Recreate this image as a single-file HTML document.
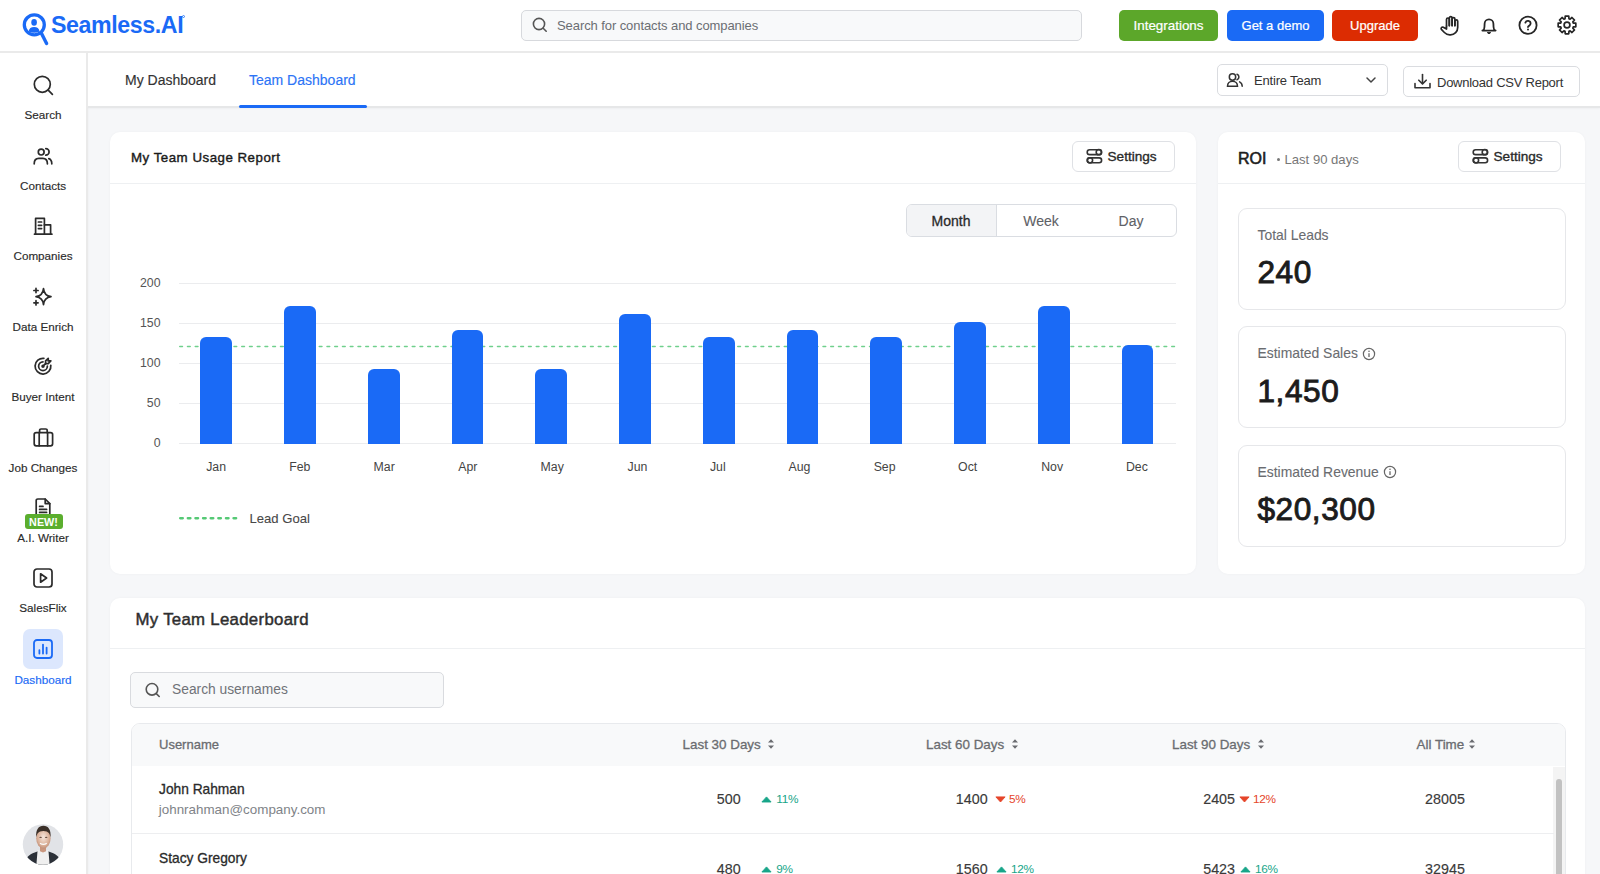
<!DOCTYPE html>
<html><head><meta charset="utf-8"><title>Team Dashboard</title>
<style>
html,body{margin:0;padding:0;}
body{width:1600px;height:874px;position:relative;overflow:hidden;background:#F6F7F9;font-family:"Liberation Sans", sans-serif;}
</style></head><body>
<div style="position:absolute;left:0px;top:0px;width:1600px;height:51px;background:#fff;"></div>
<div style="position:absolute;left:0px;top:51px;width:1600px;height:2px;background:#EAEAEA;box-shadow:0 1px 2px rgba(0,0,0,0.03);"></div>
<svg style="position:absolute;left:20px;top:11px;" width="30" height="36" viewBox="0 0 30 36" fill="none">
<circle cx="14.3" cy="13.8" r="10" stroke="#1A6AF6" stroke-width="3.3"/>
<line x1="21.4" y1="22.2" x2="26.6" y2="32.4" stroke="#1A6AF6" stroke-width="3.4" stroke-linecap="round"/>
<ellipse cx="14.1" cy="11.4" rx="2.8" ry="3.3" fill="#1A6AF6"/>
<path d="M8.6 20.4 Q9.4 16.1 14.1 16.1 Q18.8 16.1 19.6 20.4 Q14.1 23.2 8.6 20.4Z" fill="#1A6AF6"/>
</svg>
<div style="position:absolute;top:13.56px;font-size:23.2px;line-height:23.2px;color:#1A6AF6;font-weight:700;white-space:nowrap;letter-spacing:-0.4px;left:51px;">Seamless.AI</div>
<div style="position:absolute;left:182px;top:15px;width:3px;height:3px;border-radius:50%;border:0.8px solid #1A6AF6;box-sizing:border-box;opacity:.8"></div>
<div style="position:absolute;left:521px;top:10px;width:561px;height:31px;background:#F8F9FA;border:1px solid #D7D9DD;border-radius:5px;box-sizing:border-box;"></div>
<svg style="position:absolute;left:532px;top:17px;" width="16" height="16" viewBox="0 0 16 16" fill="none"><circle cx="7" cy="7" r="5.6" stroke="#555" stroke-width="1.6"/><line x1="11.2" y1="11.2" x2="14.2" y2="14.2" stroke="#555" stroke-width="1.6" stroke-linecap="round"/></svg>
<div style="position:absolute;top:18.99px;font-size:13px;line-height:13px;color:#6B6E73;font-weight:400;white-space:nowrap;letter-spacing:-0.08px;left:557px;">Search for contacts and companies</div>
<div style="position:absolute;left:1119px;top:10px;width:99px;height:31px;background:#5CA72A;border-radius:5px;"></div>
<div style="position:absolute;top:18.85px;font-size:13.4px;line-height:13.4px;color:#fff;font-weight:400;white-space:nowrap;-webkit-text-stroke:0.22px #fff;left:668.5px;width:1000px;text-align:center;">Integrations</div>
<div style="position:absolute;left:1227px;top:10px;width:97px;height:31px;background:#1A6AF5;border-radius:5px;"></div>
<div style="position:absolute;top:19.19px;font-size:13px;line-height:13px;color:#fff;font-weight:400;white-space:nowrap;-webkit-text-stroke:0.22px #fff;left:775.5px;width:1000px;text-align:center;">Get a demo</div>
<div style="position:absolute;left:1332px;top:10px;width:86px;height:31px;background:#DC2C02;border-radius:5px;"></div>
<div style="position:absolute;top:19.19px;font-size:13px;line-height:13px;color:#fff;font-weight:400;white-space:nowrap;-webkit-text-stroke:0.22px #fff;left:875.0px;width:1000px;text-align:center;">Upgrade</div>
<svg style="position:absolute;left:1439px;top:14px;" width="22" height="22" viewBox="0 0 22 22" fill="none"><g stroke="#262626" stroke-width="1.7" stroke-linecap="round" stroke-linejoin="round" fill="none">
<path d="M7.5 12V5.4a1.4 1.4 0 0 1 2.8 0V11.6"/>
<path d="M10.3 11.6V4a1.4 1.4 0 0 1 2.8 0V11.6"/>
<path d="M13.1 11.6V5a1.4 1.4 0 0 1 2.8 0V11.6"/>
<path d="M15.9 11.6V7.2a1.4 1.4 0 0 1 2.8 0v6.3a7.2 7.2 0 0 1-7.2 7.3h-.8c-2.2 0-3.8-.8-5.3-2.3L2.4 15.4a1.5 1.5 0 0 1 1.9-2.2l3.2 1.8V12"/>
</g></svg>
<svg style="position:absolute;left:1479px;top:15px;" width="20" height="20" viewBox="0 0 20 20" fill="none"><g stroke="#262626" stroke-width="1.8" stroke-linecap="round" stroke-linejoin="round" fill="none">
<path d="M5 14.2c.6-1.2.6-3 .6-5.4a4.4 4.4 0 0 1 8.8 0c0 2.4 0 4.2.6 5.4.4.7 1 1 1.6 1.4H3.4c.6-.4 1.2-.7 1.6-1.4z"/>
</g><path d="M8.3 17.6h3.4L10 18.8z" fill="#262626" stroke="#262626" stroke-width="1" stroke-linejoin="round"/></svg>
<svg style="position:absolute;left:1518px;top:15px;" width="20" height="20" viewBox="0 0 20 20" fill="none"><g stroke="#262626" stroke-width="1.8" stroke-linecap="round" stroke-linejoin="round" fill="none">
<circle cx="10" cy="10.2" r="8.6"/>
<path d="M7.4 7.6a2.7 2.7 0 0 1 5.2.9c0 1.8-2.6 2.4-2.6 3.6"/></g>
<circle cx="10" cy="14.6" r="1" fill="#262626"/></svg>
<svg style="position:absolute;left:1557px;top:15px;" width="20" height="20" viewBox="0 0 20 20" fill="none"><g stroke="#262626" stroke-width="1.7" stroke-linejoin="round" fill="none">
<path d="M8.05 3.69 L8.21 1.18 L11.79 1.18 L11.95 3.69 L13.08 4.16 L14.97 2.50 L17.50 5.03 L15.84 6.92 L16.31 8.05 L18.82 8.21 L18.82 11.79 L16.31 11.95 L15.84 13.08 L17.50 14.97 L14.97 17.50 L13.08 15.84 L11.95 16.31 L11.79 18.82 L8.21 18.82 L8.05 16.31 L6.92 15.84 L5.03 17.50 L2.50 14.97 L4.16 13.08 L3.69 11.95 L1.18 11.79 L1.18 8.21 L3.69 8.05 L4.16 6.92 L2.50 5.03 L5.03 2.50 L6.92 4.16Z"/>
<circle cx="10" cy="10" r="2.9"/></g></svg>
<div style="position:absolute;left:0px;top:53px;width:86px;height:821px;background:#fff;"></div>
<div style="position:absolute;left:86px;top:53px;width:1.5px;height:821px;background:#EAEAEA;box-shadow:1px 0 2px rgba(0,0,0,0.025);"></div>
<div style="position:absolute;left:87.5px;top:53px;width:1512.5px;height:53.5px;background:#fff;"></div>
<div style="position:absolute;left:87.5px;top:106px;width:1512.5px;height:1.5px;background:#E6E7E8;box-shadow:0 1px 2px rgba(0,0,0,0.035);"></div>
<div style="position:absolute;top:73.15px;font-size:14px;line-height:14px;color:#333;font-weight:400;white-space:nowrap;-webkit-text-stroke:0.15px #333;left:125px;">My Dashboard</div>
<div style="position:absolute;top:73.15px;font-size:14px;line-height:14px;color:#2C74F6;font-weight:400;white-space:nowrap;-webkit-text-stroke:0.15px #2C74F6;left:249px;">Team Dashboard</div>
<div style="position:absolute;left:238.5px;top:104.5px;width:128.5px;height:3px;background:#1A6AF6;border-radius:2px;"></div>
<div style="position:absolute;left:1217px;top:64px;width:171px;height:32px;background:#fff;border:1px solid #DADCE0;border-radius:5px;box-sizing:border-box;"></div>
<svg style="position:absolute;left:1226px;top:72px;" width="18" height="16" viewBox="0 0 18 16" fill="none"><g stroke="#333" stroke-width="1.5" stroke-linecap="round" fill="none">
<circle cx="6.5" cy="5" r="3.2"/><path d="M1.5 14.2c0-3 2.2-5 5-5s5 2 5 5z"/><path d="M11 2.2a3 3 0 0 1 0 5.6"/><path d="M13.6 9.8c1.6.8 2.6 2.4 2.6 4.4"/></g></svg>
<div style="position:absolute;top:74.39px;font-size:13px;line-height:13px;color:#333;font-weight:400;white-space:nowrap;letter-spacing:-0.18px;left:1254px;">Entire Team</div>
<svg style="position:absolute;left:1364px;top:74px;" width="14" height="12" viewBox="0 0 14 12" fill="none"><path d="M3 4l4 4 4-4" stroke="#444" stroke-width="1.5" fill="none" stroke-linecap="round" stroke-linejoin="round"/></svg>
<div style="position:absolute;left:1403px;top:66px;width:177px;height:31px;background:#fff;border:1px solid #DADCE0;border-radius:5px;box-sizing:border-box;"></div>
<svg style="position:absolute;left:1413px;top:73px;" width="19" height="17" viewBox="0 0 19 17" fill="none"><g stroke="#333" stroke-width="1.6" stroke-linecap="round" stroke-linejoin="round" fill="none">
<path d="M9.5 1.5v9"/><path d="M5.8 7.2l3.7 3.7 3.7-3.7"/><path d="M2 10.5v4.3h15v-4.3"/></g></svg>
<div style="position:absolute;top:75.69px;font-size:13px;line-height:13px;color:#333;font-weight:400;white-space:nowrap;letter-spacing:-0.25px;left:1437px;">Download CSV Report</div>
<div style="position:absolute;left:110px;top:132px;width:1085.5px;height:442px;background:#fff;border-radius:10px;box-shadow:0 0 3px rgba(0,0,0,0.035);"></div>
<div style="position:absolute;left:110px;top:183px;width:1085.5px;height:1px;background:#EEF0F2;"></div>
<div style="position:absolute;top:150.74px;font-size:13.3px;line-height:13.3px;color:#1A1A1A;font-weight:400;white-space:nowrap;letter-spacing:0.5px;-webkit-text-stroke:0.4px #1A1A1A;left:131px;">My Team Usage Report</div>
<div style="position:absolute;left:1072px;top:141px;width:103px;height:31px;background:#fff;border:1px solid #DFE1E5;border-radius:6px;box-sizing:border-box;"></div>
<svg style="position:absolute;left:1086px;top:148px;" width="17" height="17" viewBox="0 0 17 17" fill="none"><g stroke="#333" stroke-width="1.6" fill="none">
<rect x="1.2" y="1.7" width="14.4" height="4.9" rx="2.45"/><rect x="1.2" y="9.9" width="14.4" height="4.9" rx="2.45"/>
<circle cx="12.8" cy="4.15" r="2.6"/><circle cx="4" cy="12.35" r="2.6"/></g></svg>
<div style="position:absolute;top:149.68px;font-size:13.6px;line-height:13.6px;color:#2A2A2A;font-weight:400;white-space:nowrap;-webkit-text-stroke:0.35px #2A2A2A;left:1107.5px;">Settings</div>
<div style="position:absolute;left:906px;top:204px;width:271px;height:33px;background:#fff;border:1px solid #DADDE2;border-radius:6px;box-sizing:border-box;"></div>
<div style="position:absolute;left:907px;top:205px;width:89.5px;height:31px;background:#F3F4F6;border-radius:5px 0 0 5px;"></div>
<div style="position:absolute;left:996px;top:205px;width:1px;height:31px;background:#DADDE2;"></div>
<div style="position:absolute;top:214.05px;font-size:14px;line-height:14px;color:#2A2A2A;font-weight:400;white-space:nowrap;-webkit-text-stroke:0.3px #2A2A2A;left:451px;width:1000px;text-align:center;">Month</div>
<div style="position:absolute;top:214.05px;font-size:14px;line-height:14px;color:#5E6166;font-weight:400;white-space:nowrap;-webkit-text-stroke:0.1px #5E6166;left:541px;width:1000px;text-align:center;">Week</div>
<div style="position:absolute;top:214.05px;font-size:14px;line-height:14px;color:#5E6166;font-weight:400;white-space:nowrap;-webkit-text-stroke:0.1px #5E6166;left:631px;width:1000px;text-align:center;">Day</div>
<div style="position:absolute;left:179px;top:443.3px;width:997px;height:1px;background:#EBECEE;"></div>
<div style="position:absolute;top:437.29px;font-size:12.3px;line-height:12.3px;color:#555;font-weight:400;white-space:nowrap;left:-839.5px;width:1000px;text-align:right;">0</div>
<div style="position:absolute;left:179px;top:403.12px;width:997px;height:1px;background:#EBECEE;"></div>
<div style="position:absolute;top:397.11px;font-size:12.3px;line-height:12.3px;color:#555;font-weight:400;white-space:nowrap;left:-839.5px;width:1000px;text-align:right;">50</div>
<div style="position:absolute;left:179px;top:362.95px;width:997px;height:1px;background:#EBECEE;"></div>
<div style="position:absolute;top:356.94px;font-size:12.3px;line-height:12.3px;color:#555;font-weight:400;white-space:nowrap;left:-839.5px;width:1000px;text-align:right;">100</div>
<div style="position:absolute;left:179px;top:322.77px;width:997px;height:1px;background:#EBECEE;"></div>
<div style="position:absolute;top:316.76px;font-size:12.3px;line-height:12.3px;color:#555;font-weight:400;white-space:nowrap;left:-839.5px;width:1000px;text-align:right;">150</div>
<div style="position:absolute;left:179px;top:282.6px;width:997px;height:1px;background:#EBECEE;"></div>
<div style="position:absolute;top:276.59px;font-size:12.3px;line-height:12.3px;color:#555;font-weight:400;white-space:nowrap;left:-839.5px;width:1000px;text-align:right;">200</div>
<svg style="position:absolute;left:179px;top:345.25px;" width="997" height="3" viewBox="0 0 997 3" fill="none"><line x1="0.75" y1="1.5" x2="997" y2="1.5" stroke="#6FD08C" stroke-width="1.5" stroke-linecap="round" stroke-dasharray="2.7 5.05"/></svg>
<div style="position:absolute;left:200.3px;top:337.1px;width:31.8px;height:107.19999999999999px;background:#1A6AF6;border-radius:6px 6px 0 0;"></div>
<div style="position:absolute;top:460.59px;font-size:12.3px;line-height:12.3px;color:#444;font-weight:400;white-space:nowrap;left:-283.9px;width:1000px;text-align:center;">Jan</div>
<div style="position:absolute;left:284.06px;top:306.1px;width:31.8px;height:138.2px;background:#1A6AF6;border-radius:6px 6px 0 0;"></div>
<div style="position:absolute;top:460.59px;font-size:12.3px;line-height:12.3px;color:#444;font-weight:400;white-space:nowrap;left:-200.25px;width:1000px;text-align:center;">Feb</div>
<div style="position:absolute;left:367.82px;top:368.8px;width:31.8px;height:75.5px;background:#1A6AF6;border-radius:6px 6px 0 0;"></div>
<div style="position:absolute;top:460.59px;font-size:12.3px;line-height:12.3px;color:#444;font-weight:400;white-space:nowrap;left:-115.80000000000001px;width:1000px;text-align:center;">Mar</div>
<div style="position:absolute;left:451.58px;top:329.6px;width:31.8px;height:114.69999999999999px;background:#1A6AF6;border-radius:6px 6px 0 0;"></div>
<div style="position:absolute;top:460.59px;font-size:12.3px;line-height:12.3px;color:#444;font-weight:400;white-space:nowrap;left:-32.19999999999999px;width:1000px;text-align:center;">Apr</div>
<div style="position:absolute;left:535.34px;top:368.8px;width:31.8px;height:75.5px;background:#1A6AF6;border-radius:6px 6px 0 0;"></div>
<div style="position:absolute;top:460.59px;font-size:12.3px;line-height:12.3px;color:#444;font-weight:400;white-space:nowrap;left:52.200000000000045px;width:1000px;text-align:center;">May</div>
<div style="position:absolute;left:619.1px;top:313.6px;width:31.8px;height:130.7px;background:#1A6AF6;border-radius:6px 6px 0 0;"></div>
<div style="position:absolute;top:460.59px;font-size:12.3px;line-height:12.3px;color:#444;font-weight:400;white-space:nowrap;left:137.5px;width:1000px;text-align:center;">Jun</div>
<div style="position:absolute;left:702.86px;top:337.3px;width:31.8px;height:107.0px;background:#1A6AF6;border-radius:6px 6px 0 0;"></div>
<div style="position:absolute;top:460.59px;font-size:12.3px;line-height:12.3px;color:#444;font-weight:400;white-space:nowrap;left:217.79999999999995px;width:1000px;text-align:center;">Jul</div>
<div style="position:absolute;left:786.62px;top:329.8px;width:31.8px;height:114.5px;background:#1A6AF6;border-radius:6px 6px 0 0;"></div>
<div style="position:absolute;top:460.59px;font-size:12.3px;line-height:12.3px;color:#444;font-weight:400;white-space:nowrap;left:299.5px;width:1000px;text-align:center;">Aug</div>
<div style="position:absolute;left:870.38px;top:337.3px;width:31.8px;height:107.0px;background:#1A6AF6;border-radius:6px 6px 0 0;"></div>
<div style="position:absolute;top:460.59px;font-size:12.3px;line-height:12.3px;color:#444;font-weight:400;white-space:nowrap;left:384.6px;width:1000px;text-align:center;">Sep</div>
<div style="position:absolute;left:954.14px;top:321.9px;width:31.8px;height:122.40000000000003px;background:#1A6AF6;border-radius:6px 6px 0 0;"></div>
<div style="position:absolute;top:460.59px;font-size:12.3px;line-height:12.3px;color:#444;font-weight:400;white-space:nowrap;left:467.70000000000005px;width:1000px;text-align:center;">Oct</div>
<div style="position:absolute;left:1037.9px;top:306.1px;width:31.8px;height:138.2px;background:#1A6AF6;border-radius:6px 6px 0 0;"></div>
<div style="position:absolute;top:460.59px;font-size:12.3px;line-height:12.3px;color:#444;font-weight:400;white-space:nowrap;left:552.0999999999999px;width:1000px;text-align:center;">Nov</div>
<div style="position:absolute;left:1121.66px;top:345.2px;width:31.8px;height:99.10000000000002px;background:#1A6AF6;border-radius:6px 6px 0 0;"></div>
<div style="position:absolute;top:460.59px;font-size:12.3px;line-height:12.3px;color:#444;font-weight:400;white-space:nowrap;left:636.9000000000001px;width:1000px;text-align:center;">Dec</div>
<svg style="position:absolute;left:178px;top:515px;" width="66" height="6" viewBox="0 0 66 6" fill="none"><rect x="1.00" y="2.1" width="5" height="2.3" rx="1.15" fill="#55C975"/><rect x="8.62" y="2.1" width="5" height="2.3" rx="1.15" fill="#55C975"/><rect x="16.24" y="2.1" width="5" height="2.3" rx="1.15" fill="#55C975"/><rect x="23.86" y="2.1" width="5" height="2.3" rx="1.15" fill="#55C975"/><rect x="31.48" y="2.1" width="5" height="2.3" rx="1.15" fill="#55C975"/><rect x="39.10" y="2.1" width="5" height="2.3" rx="1.15" fill="#55C975"/><rect x="46.72" y="2.1" width="5" height="2.3" rx="1.15" fill="#55C975"/><rect x="54.34" y="2.1" width="5" height="2.3" rx="1.15" fill="#55C975"/></svg>
<div style="position:absolute;top:512.31px;font-size:13.1px;line-height:13.1px;color:#484848;font-weight:400;white-space:nowrap;-webkit-text-stroke:0.1px #484848;left:249.5px;">Lead Goal</div>
<div style="position:absolute;left:1217.5px;top:132px;width:367.5px;height:442px;background:#fff;border-radius:10px;box-shadow:0 0 3px rgba(0,0,0,0.035);"></div>
<div style="position:absolute;left:1217.5px;top:183px;width:367.5px;height:1px;background:#EEF0F2;"></div>
<div style="position:absolute;top:151.45px;font-size:16px;line-height:16px;color:#1E1E1E;font-weight:400;white-space:nowrap;-webkit-text-stroke:0.6px #1E1E1E;left:1238px;">ROI</div>
<div style="position:absolute;left:1277px;top:158px;width:3px;height:3px;border-radius:50%;background:#777"></div>
<div style="position:absolute;top:152.51px;font-size:13.1px;line-height:13.1px;color:#777;font-weight:400;white-space:nowrap;left:1284.5px;">Last 90 days</div>
<div style="position:absolute;left:1458px;top:141px;width:103px;height:31px;background:#fff;border:1px solid #DFE1E5;border-radius:6px;box-sizing:border-box;"></div>
<svg style="position:absolute;left:1472px;top:148px;" width="17" height="17" viewBox="0 0 17 17" fill="none"><g stroke="#333" stroke-width="1.6" fill="none">
<rect x="1.2" y="1.7" width="14.4" height="4.9" rx="2.45"/><rect x="1.2" y="9.9" width="14.4" height="4.9" rx="2.45"/>
<circle cx="12.8" cy="4.15" r="2.6"/><circle cx="4" cy="12.35" r="2.6"/></g></svg>
<div style="position:absolute;top:149.68px;font-size:13.6px;line-height:13.6px;color:#2A2A2A;font-weight:400;white-space:nowrap;-webkit-text-stroke:0.35px #2A2A2A;left:1493.5px;">Settings</div>
<div style="position:absolute;left:1238px;top:207.5px;width:327.5px;height:102px;background:#fff;border:1.5px solid #E6E7EA;border-radius:9px;box-sizing:border-box;"></div>
<div style="position:absolute;top:228.73px;font-size:13.9px;line-height:13.9px;color:#6A6C70;font-weight:400;white-space:nowrap;-webkit-text-stroke:0.1px #6A6C70;left:1257.5px;">Total Leads</div>
<div style="position:absolute;top:257.04px;font-size:31.6px;line-height:31.6px;color:#1C1C1C;font-weight:400;white-space:nowrap;letter-spacing:0.55px;-webkit-text-stroke:0.9px #1C1C1C;left:1257.5px;">240</div>
<div style="position:absolute;left:1238px;top:326px;width:327.5px;height:102px;background:#fff;border:1.5px solid #E6E7EA;border-radius:9px;box-sizing:border-box;"></div>
<div style="position:absolute;top:347.23px;font-size:13.9px;line-height:13.9px;color:#6A6C70;font-weight:400;white-space:nowrap;-webkit-text-stroke:0.1px #6A6C70;left:1257.5px;">Estimated Sales</div>
<div style="position:absolute;top:375.54px;font-size:31.6px;line-height:31.6px;color:#1C1C1C;font-weight:400;white-space:nowrap;letter-spacing:0.55px;-webkit-text-stroke:0.9px #1C1C1C;left:1257.5px;">1,450</div>
<div style="position:absolute;left:1238px;top:444.5px;width:327.5px;height:102px;background:#fff;border:1.5px solid #E6E7EA;border-radius:9px;box-sizing:border-box;"></div>
<div style="position:absolute;top:465.73px;font-size:13.9px;line-height:13.9px;color:#6A6C70;font-weight:400;white-space:nowrap;-webkit-text-stroke:0.1px #6A6C70;left:1257.5px;">Estimated Revenue</div>
<div style="position:absolute;top:494.04px;font-size:31.6px;line-height:31.6px;color:#1C1C1C;font-weight:400;white-space:nowrap;letter-spacing:0.55px;-webkit-text-stroke:0.9px #1C1C1C;left:1257.5px;">$20,300</div>
<svg style="position:absolute;left:1362px;top:346.5px;" width="14" height="14" viewBox="0 0 14 14" fill="none"><circle cx="7" cy="7" r="5.6" stroke="#666" stroke-width="1.2" fill="none"/><line x1="7" y1="6.2" x2="7" y2="10" stroke="#666" stroke-width="1.3"/><circle cx="7" cy="4.3" r=".8" fill="#666"/></svg>
<svg style="position:absolute;left:1383px;top:465px;" width="14" height="14" viewBox="0 0 14 14" fill="none"><circle cx="7" cy="7" r="5.6" stroke="#666" stroke-width="1.2" fill="none"/><line x1="7" y1="6.2" x2="7" y2="10" stroke="#666" stroke-width="1.3"/><circle cx="7" cy="4.3" r=".8" fill="#666"/></svg>
<div style="position:absolute;left:110px;top:597.5px;width:1475px;height:300px;background:#fff;border-radius:10px;box-shadow:0 0 3px rgba(0,0,0,0.035);"></div>
<div style="position:absolute;left:110px;top:648px;width:1475px;height:1px;background:#EEF0F2;"></div>
<div style="position:absolute;top:612.28px;font-size:16.8px;line-height:16.8px;color:#2E2E2E;font-weight:400;white-space:nowrap;letter-spacing:0.3px;-webkit-text-stroke:0.45px #2E2E2E;left:135.5px;">My Team Leaderboard</div>
<div style="position:absolute;left:130px;top:672px;width:314px;height:36px;background:#F8F9FA;border:1px solid #D9DBDF;border-radius:5px;box-sizing:border-box;"></div>
<svg style="position:absolute;left:144px;top:682px;" width="18" height="16" viewBox="0 0 18 16" fill="none"><circle cx="8" cy="7.3" r="5.8" stroke="#555" stroke-width="1.6" fill="none"/><line x1="12.3" y1="11.6" x2="15.2" y2="14.5" stroke="#555" stroke-width="1.6" stroke-linecap="round"/></svg>
<div style="position:absolute;top:682.92px;font-size:13.8px;line-height:13.8px;color:#707378;font-weight:400;white-space:nowrap;left:172px;">Search usernames</div>
<div style="position:absolute;left:130.5px;top:722.5px;width:1435px;height:200px;background:#fff;border:1px solid #E8EAED;border-radius:9px;box-sizing:border-box;"></div>
<div style="position:absolute;left:131.5px;top:723.5px;width:1433px;height:42.5px;background:#F8F9FA;border-radius:8px 8px 0 0;"></div>
<div style="position:absolute;top:738.29px;font-size:13px;line-height:13px;color:#6A6C70;font-weight:400;white-space:nowrap;-webkit-text-stroke:0.3px #6A6C70;left:159px;">Username</div>
<div style="position:absolute;top:737.95px;font-size:13.4px;line-height:13.4px;color:#6A6C70;font-weight:400;white-space:nowrap;-webkit-text-stroke:0.3px #6A6C70;left:682.6px;">Last 30 Days</div>
<div style="position:absolute;top:737.95px;font-size:13.4px;line-height:13.4px;color:#6A6C70;font-weight:400;white-space:nowrap;-webkit-text-stroke:0.3px #6A6C70;left:926px;">Last 60 Days</div>
<div style="position:absolute;top:737.95px;font-size:13.4px;line-height:13.4px;color:#6A6C70;font-weight:400;white-space:nowrap;-webkit-text-stroke:0.3px #6A6C70;left:1172px;">Last 90 Days</div>
<div style="position:absolute;top:737.95px;font-size:13.4px;line-height:13.4px;color:#6A6C70;font-weight:400;white-space:nowrap;-webkit-text-stroke:0.3px #6A6C70;left:1416.6px;">All Time</div>
<svg style="position:absolute;left:766.5px;top:738px;" width="8" height="12" viewBox="0 0 8 12" fill="none"><path d="M4 1.2L7 4.6H1z M4 10.8L7 7.4H1z" fill="#6A6C70"/></svg>
<svg style="position:absolute;left:1011px;top:738px;" width="8" height="12" viewBox="0 0 8 12" fill="none"><path d="M4 1.2L7 4.6H1z M4 10.8L7 7.4H1z" fill="#6A6C70"/></svg>
<svg style="position:absolute;left:1257px;top:738px;" width="8" height="12" viewBox="0 0 8 12" fill="none"><path d="M4 1.2L7 4.6H1z M4 10.8L7 7.4H1z" fill="#6A6C70"/></svg>
<svg style="position:absolute;left:1467.5px;top:738px;" width="8" height="12" viewBox="0 0 8 12" fill="none"><path d="M4 1.2L7 4.6H1z M4 10.8L7 7.4H1z" fill="#6A6C70"/></svg>
<div style="position:absolute;left:1553px;top:767px;width:12px;height:110px;background:#F4F4F4;"></div>
<div style="position:absolute;left:1555.5px;top:779px;width:6.5px;height:100px;background:#C2C2C2;border-radius:3px;"></div>
<div style="position:absolute;left:131.5px;top:833px;width:1422px;height:1.2px;background:#EDEEF0;"></div>
<div style="position:absolute;top:783.16px;font-size:13.75px;line-height:13.75px;color:#2A2A2A;font-weight:400;white-space:nowrap;-webkit-text-stroke:0.3px #2A2A2A;left:159px;">John Rahman</div>
<div style="position:absolute;top:802.65px;font-size:13.4px;line-height:13.4px;color:#808388;font-weight:400;white-space:nowrap;left:158.8px;">johnrahman@company.com</div>
<div style="position:absolute;top:852.36px;font-size:13.75px;line-height:13.75px;color:#2A2A2A;font-weight:400;white-space:nowrap;-webkit-text-stroke:0.3px #2A2A2A;left:159px;">Stacy Gregory</div>
<div style="position:absolute;top:872.25px;font-size:13.4px;line-height:13.4px;color:#808388;font-weight:400;white-space:nowrap;left:159px;">stacygregory@company.com</div>
<div style="position:absolute;top:792.39px;font-size:14.3px;line-height:14.3px;color:#3A3A3A;font-weight:400;white-space:nowrap;-webkit-text-stroke:0.15px #3A3A3A;left:-259.4px;width:1000px;text-align:right;">500</div>
<svg style="position:absolute;left:760.8px;top:795.8px;" width="11" height="8" viewBox="0 0 11 8" fill="none"><path d="M5.5 0.9L10.1 6H0.9z" fill="#17A589" stroke="#17A589" stroke-width="0.9" stroke-linejoin="round"/></svg>
<div style="position:absolute;top:794.31px;font-size:11.8px;line-height:11.8px;color:#17A589;font-weight:400;white-space:nowrap;letter-spacing:-0.3px;left:776.3px;">11%</div>
<div style="position:absolute;top:792.39px;font-size:14.3px;line-height:14.3px;color:#3A3A3A;font-weight:400;white-space:nowrap;-webkit-text-stroke:0.15px #3A3A3A;left:-12.399999999999977px;width:1000px;text-align:right;">1400</div>
<svg style="position:absolute;left:994.5px;top:796.3px;" width="11" height="8" viewBox="0 0 11 8" fill="none"><path d="M5.5 6L10.1 0.9H0.9z" fill="#E5452A" stroke="#E5452A" stroke-width="0.9" stroke-linejoin="round"/></svg>
<div style="position:absolute;top:794.31px;font-size:11.8px;line-height:11.8px;color:#E5452A;font-weight:400;white-space:nowrap;letter-spacing:-0.3px;left:1009.0px;">5%</div>
<div style="position:absolute;top:792.39px;font-size:14.3px;line-height:14.3px;color:#3A3A3A;font-weight:400;white-space:nowrap;-webkit-text-stroke:0.15px #3A3A3A;left:235.0px;width:1000px;text-align:right;">2405</div>
<svg style="position:absolute;left:1238.5px;top:796.3px;" width="11" height="8" viewBox="0 0 11 8" fill="none"><path d="M5.5 6L10.1 0.9H0.9z" fill="#E5452A" stroke="#E5452A" stroke-width="0.9" stroke-linejoin="round"/></svg>
<div style="position:absolute;top:794.31px;font-size:11.8px;line-height:11.8px;color:#E5452A;font-weight:400;white-space:nowrap;letter-spacing:-0.3px;left:1253.0px;">12%</div>
<div style="position:absolute;top:792.39px;font-size:14.3px;line-height:14.3px;color:#3A3A3A;font-weight:400;white-space:nowrap;-webkit-text-stroke:0.15px #3A3A3A;left:945px;width:1000px;text-align:center;">28005</div>
<div style="position:absolute;top:862.39px;font-size:14.3px;line-height:14.3px;color:#3A3A3A;font-weight:400;white-space:nowrap;-webkit-text-stroke:0.15px #3A3A3A;left:-259.4px;width:1000px;text-align:right;">480</div>
<svg style="position:absolute;left:760.8px;top:865.8px;" width="11" height="8" viewBox="0 0 11 8" fill="none"><path d="M5.5 0.9L10.1 6H0.9z" fill="#17A589" stroke="#17A589" stroke-width="0.9" stroke-linejoin="round"/></svg>
<div style="position:absolute;top:864.31px;font-size:11.8px;line-height:11.8px;color:#17A589;font-weight:400;white-space:nowrap;letter-spacing:-0.3px;left:776.3px;">9%</div>
<div style="position:absolute;top:862.39px;font-size:14.3px;line-height:14.3px;color:#3A3A3A;font-weight:400;white-space:nowrap;-webkit-text-stroke:0.15px #3A3A3A;left:-12.399999999999977px;width:1000px;text-align:right;">1560</div>
<svg style="position:absolute;left:995.5px;top:865.8px;" width="11" height="8" viewBox="0 0 11 8" fill="none"><path d="M5.5 0.9L10.1 6H0.9z" fill="#17A589" stroke="#17A589" stroke-width="0.9" stroke-linejoin="round"/></svg>
<div style="position:absolute;top:864.31px;font-size:11.8px;line-height:11.8px;color:#17A589;font-weight:400;white-space:nowrap;letter-spacing:-0.3px;left:1011.0px;">12%</div>
<div style="position:absolute;top:862.39px;font-size:14.3px;line-height:14.3px;color:#3A3A3A;font-weight:400;white-space:nowrap;-webkit-text-stroke:0.15px #3A3A3A;left:235.0px;width:1000px;text-align:right;">5423</div>
<svg style="position:absolute;left:1239.5px;top:865.8px;" width="11" height="8" viewBox="0 0 11 8" fill="none"><path d="M5.5 0.9L10.1 6H0.9z" fill="#17A589" stroke="#17A589" stroke-width="0.9" stroke-linejoin="round"/></svg>
<div style="position:absolute;top:864.31px;font-size:11.8px;line-height:11.8px;color:#17A589;font-weight:400;white-space:nowrap;letter-spacing:-0.3px;left:1255.0px;">16%</div>
<div style="position:absolute;top:862.39px;font-size:14.3px;line-height:14.3px;color:#3A3A3A;font-weight:400;white-space:nowrap;-webkit-text-stroke:0.15px #3A3A3A;left:945px;width:1000px;text-align:center;">32945</div>
<div style="position:absolute;top:109.39px;font-size:11.7px;line-height:11.7px;color:#2B2B2B;font-weight:400;white-space:nowrap;-webkit-text-stroke:0.15px #2B2B2B;left:-457px;width:1000px;text-align:center;">Search</div>
<div style="position:absolute;top:179.59px;font-size:11.7px;line-height:11.7px;color:#2B2B2B;font-weight:400;white-space:nowrap;-webkit-text-stroke:0.15px #2B2B2B;left:-457px;width:1000px;text-align:center;">Contacts</div>
<div style="position:absolute;top:250.39px;font-size:11.7px;line-height:11.7px;color:#2B2B2B;font-weight:400;white-space:nowrap;-webkit-text-stroke:0.15px #2B2B2B;left:-457px;width:1000px;text-align:center;">Companies</div>
<div style="position:absolute;top:320.79px;font-size:11.7px;line-height:11.7px;color:#2B2B2B;font-weight:400;white-space:nowrap;-webkit-text-stroke:0.15px #2B2B2B;left:-457px;width:1000px;text-align:center;">Data Enrich</div>
<div style="position:absolute;top:391.19px;font-size:11.7px;line-height:11.7px;color:#2B2B2B;font-weight:400;white-space:nowrap;-webkit-text-stroke:0.15px #2B2B2B;left:-457px;width:1000px;text-align:center;">Buyer Intent</div>
<div style="position:absolute;top:461.99px;font-size:11.7px;line-height:11.7px;color:#2B2B2B;font-weight:400;white-space:nowrap;-webkit-text-stroke:0.15px #2B2B2B;left:-457px;width:1000px;text-align:center;">Job Changes</div>
<div style="position:absolute;top:532.29px;font-size:11.7px;line-height:11.7px;color:#2B2B2B;font-weight:400;white-space:nowrap;-webkit-text-stroke:0.15px #2B2B2B;left:-457px;width:1000px;text-align:center;">A.I. Writer</div>
<div style="position:absolute;top:602.29px;font-size:11.7px;line-height:11.7px;color:#2B2B2B;font-weight:400;white-space:nowrap;-webkit-text-stroke:0.15px #2B2B2B;left:-457px;width:1000px;text-align:center;">SalesFlix</div>
<div style="position:absolute;left:23px;top:629px;width:39.5px;height:39.5px;background:#DCE7FD;border-radius:7px;"></div>
<div style="position:absolute;top:673.59px;font-size:11.7px;line-height:11.7px;color:#1A6AF6;font-weight:400;white-space:nowrap;-webkit-text-stroke:0.15px #1A6AF6;left:-457px;width:1000px;text-align:center;">Dashboard</div>
<svg style="position:absolute;left:33px;top:74.5px;" width="21" height="21" viewBox="0 0 21 21" fill="none"><g stroke="#2B2B2B" stroke-width="1.7" stroke-linecap="round" stroke-linejoin="round" fill="none"><circle cx="9.3" cy="9.3" r="8"/><path d="M15.2 15.2l4.2 4.2"/></g></svg>
<svg style="position:absolute;left:33px;top:145.5px;" width="21" height="20" viewBox="0 0 21 20" fill="none"><g stroke="#2B2B2B" stroke-width="1.7" stroke-linecap="round" stroke-linejoin="round" fill="none"><circle cx="8.2" cy="6.1" r="2.9"/><path d="M1.2 17.8c0-3.9 1.6-5.5 4.6-5.5h4c3 0 4.6 1.6 4.6 5.5"/><path d="M12.8 2.6a3.3 3.3 0 0 1 0 6.6"/><path d="M15.8 12.6c1.9.7 3 2.4 3 5.2"/></g></svg>
<svg style="position:absolute;left:33px;top:216px;" width="21" height="20" viewBox="0 0 21 20" fill="none"><g stroke="#2B2B2B" stroke-width="1.7" stroke-linecap="round" stroke-linejoin="round" fill="none"><path d="M2.6 18.2V2.4h8.8v15.8"/><path d="M11.4 8.8h6.2v9.4"/><path d="M1.5 18.2h17.4"/><path d="M5.4 6h3.2M5.4 9.3h3.2M5.4 12.6h3.2"/></g></svg>
<svg style="position:absolute;left:32px;top:285.5px;" width="21" height="21" viewBox="0 0 21 21" fill="none"><g stroke="#2B2B2B" stroke-width="1.7" stroke-linecap="round" stroke-linejoin="round" fill="none"><path d="M11.5 2.6Q12.2 9.8 19 10.6Q12.2 11.4 11.5 18.6Q10.8 11.4 4 10.6Q10.8 9.8 11.5 2.6Z"/><path d="M4 2.4v4.2M1.9 4.5h4.2M4 14.7v4.2M1.9 16.8h4.2"/></g></svg>
<svg style="position:absolute;left:32.5px;top:356px;" width="21" height="21" viewBox="0 0 24 24" fill="none"><g stroke="#2B2B2B" stroke-width="2" stroke-linecap="round" stroke-linejoin="round" fill="none" transform="translate(-0.6 -0.4)"><circle cx="12" cy="12" r="1"/><path d="M12 7a5 5 0 1 0 5 5"/><path d="M13 3.055a9 9 0 1 0 7.941 7.945"/><path d="M15 6v3h3l3-3h-3V3z"/><path d="M15 9l-3 3"/></g></svg>
<svg style="position:absolute;left:33px;top:428px;" width="21" height="20" viewBox="0 0 21 20" fill="none"><g stroke="#2B2B2B" stroke-width="1.7" stroke-linecap="round" stroke-linejoin="round" fill="none"><rect x="1.2" y="4.6" width="18.4" height="13.2" rx="2"/><path d="M6.6 4.6V2.4a1.4 1.4 0 0 1 1.4-1.4h4.8a1.4 1.4 0 0 1 1.4 1.4v2.2"/><path d="M6.2 4.6v13.2M14.6 4.6v13.2"/></g></svg>
<svg style="position:absolute;left:34px;top:497.5px;" width="19" height="17" viewBox="0 0 19 17" fill="none"><g stroke="#2B2B2B" stroke-width="1.7" stroke-linecap="round" stroke-linejoin="round" fill="none"><path d="M2.2 16V2.6a1.6 1.6 0 0 1 1.6-1.6h7.4l4.6 4.6V16"/><path d="M11.2 1v4.6h4.6"/><path d="M5.6 8.4h3.4M5.6 11.4h7M5.6 14.4h7"/></g></svg>
<div style="position:absolute;left:24.5px;top:513.5px;width:38px;height:15.8px;background:#5BAE2E;border-radius:3px;"></div>
<div style="position:absolute;top:516.66px;font-size:10.8px;line-height:10.8px;color:#fff;font-weight:700;white-space:nowrap;left:-456.5px;width:1000px;text-align:center;">NEW!</div>
<svg style="position:absolute;left:33px;top:568px;" width="20" height="20" viewBox="0 0 20 20" fill="none"><g stroke="#2B2B2B" stroke-width="1.7" stroke-linecap="round" stroke-linejoin="round" fill="none"><rect x="1" y="1" width="18" height="18" rx="3"/><path d="M7.6 5.8v8.4l6-4.2z"/></g></svg>
<svg style="position:absolute;left:33px;top:638.5px;" width="20" height="20" viewBox="0 0 20 20" fill="none"><g stroke="#1A6AF6" stroke-width="1.8" stroke-linecap="round" stroke-linejoin="round" fill="none"><rect x="1" y="1" width="18" height="18" rx="3"/><path d="M6.4 14.6v-3.4M10 14.6V5.6M13.6 14.6V8.6"/></g></svg>
<svg style="position:absolute;left:22px;top:824px" width="42" height="42" viewBox="0 0 42 42">
<defs><clipPath id="av"><circle cx="21" cy="20.5" r="20.2"/></clipPath>
<radialGradient id="fc" cx="0.5" cy="0.45" r="0.6"><stop offset="0" stop-color="#F6E6DC"/><stop offset="0.7" stop-color="#D9AE96"/><stop offset="1" stop-color="#B88670"/></radialGradient></defs>
<g clip-path="url(#av)"><rect width="42" height="42" fill="#E1E3E7"/>
<path d="M1 44c1.5-9 5-13 11-15.2l4-1.6h10l4 1.6c6 2.2 9.5 6.2 11 15.2z" fill="#2B3038"/>
<path d="M15.6 26l5.4 1.5 5.4-1.5 1.4 17H14.2z" fill="#EFEFEF"/>
<path d="M18 21h6v6.2l-3 1.4-3-1.4z" fill="#C9967E"/>
<ellipse cx="21.4" cy="14.2" rx="7.2" ry="10.2" fill="url(#fc)"/>
<path d="M14.2 13.5c-.6-8 2.4-11.8 7.2-11.8s7.8 3.8 7.2 11.8c-.6-3.4-1.8-6.6-7.2-6.6s-6.6 3.2-7.2 6.6z" fill="#3B3029"/>
<path d="M18 19.2q3.4 2.2 6.8 0" stroke="#FAFAFA" stroke-width="1.3" fill="none"/>
<ellipse cx="18.6" cy="13.4" rx="1.2" ry=".6" fill="#6B5346"/><ellipse cx="24.2" cy="13.4" rx="1.2" ry=".6" fill="#6B5346"/>
</g></svg>
</body></html>
